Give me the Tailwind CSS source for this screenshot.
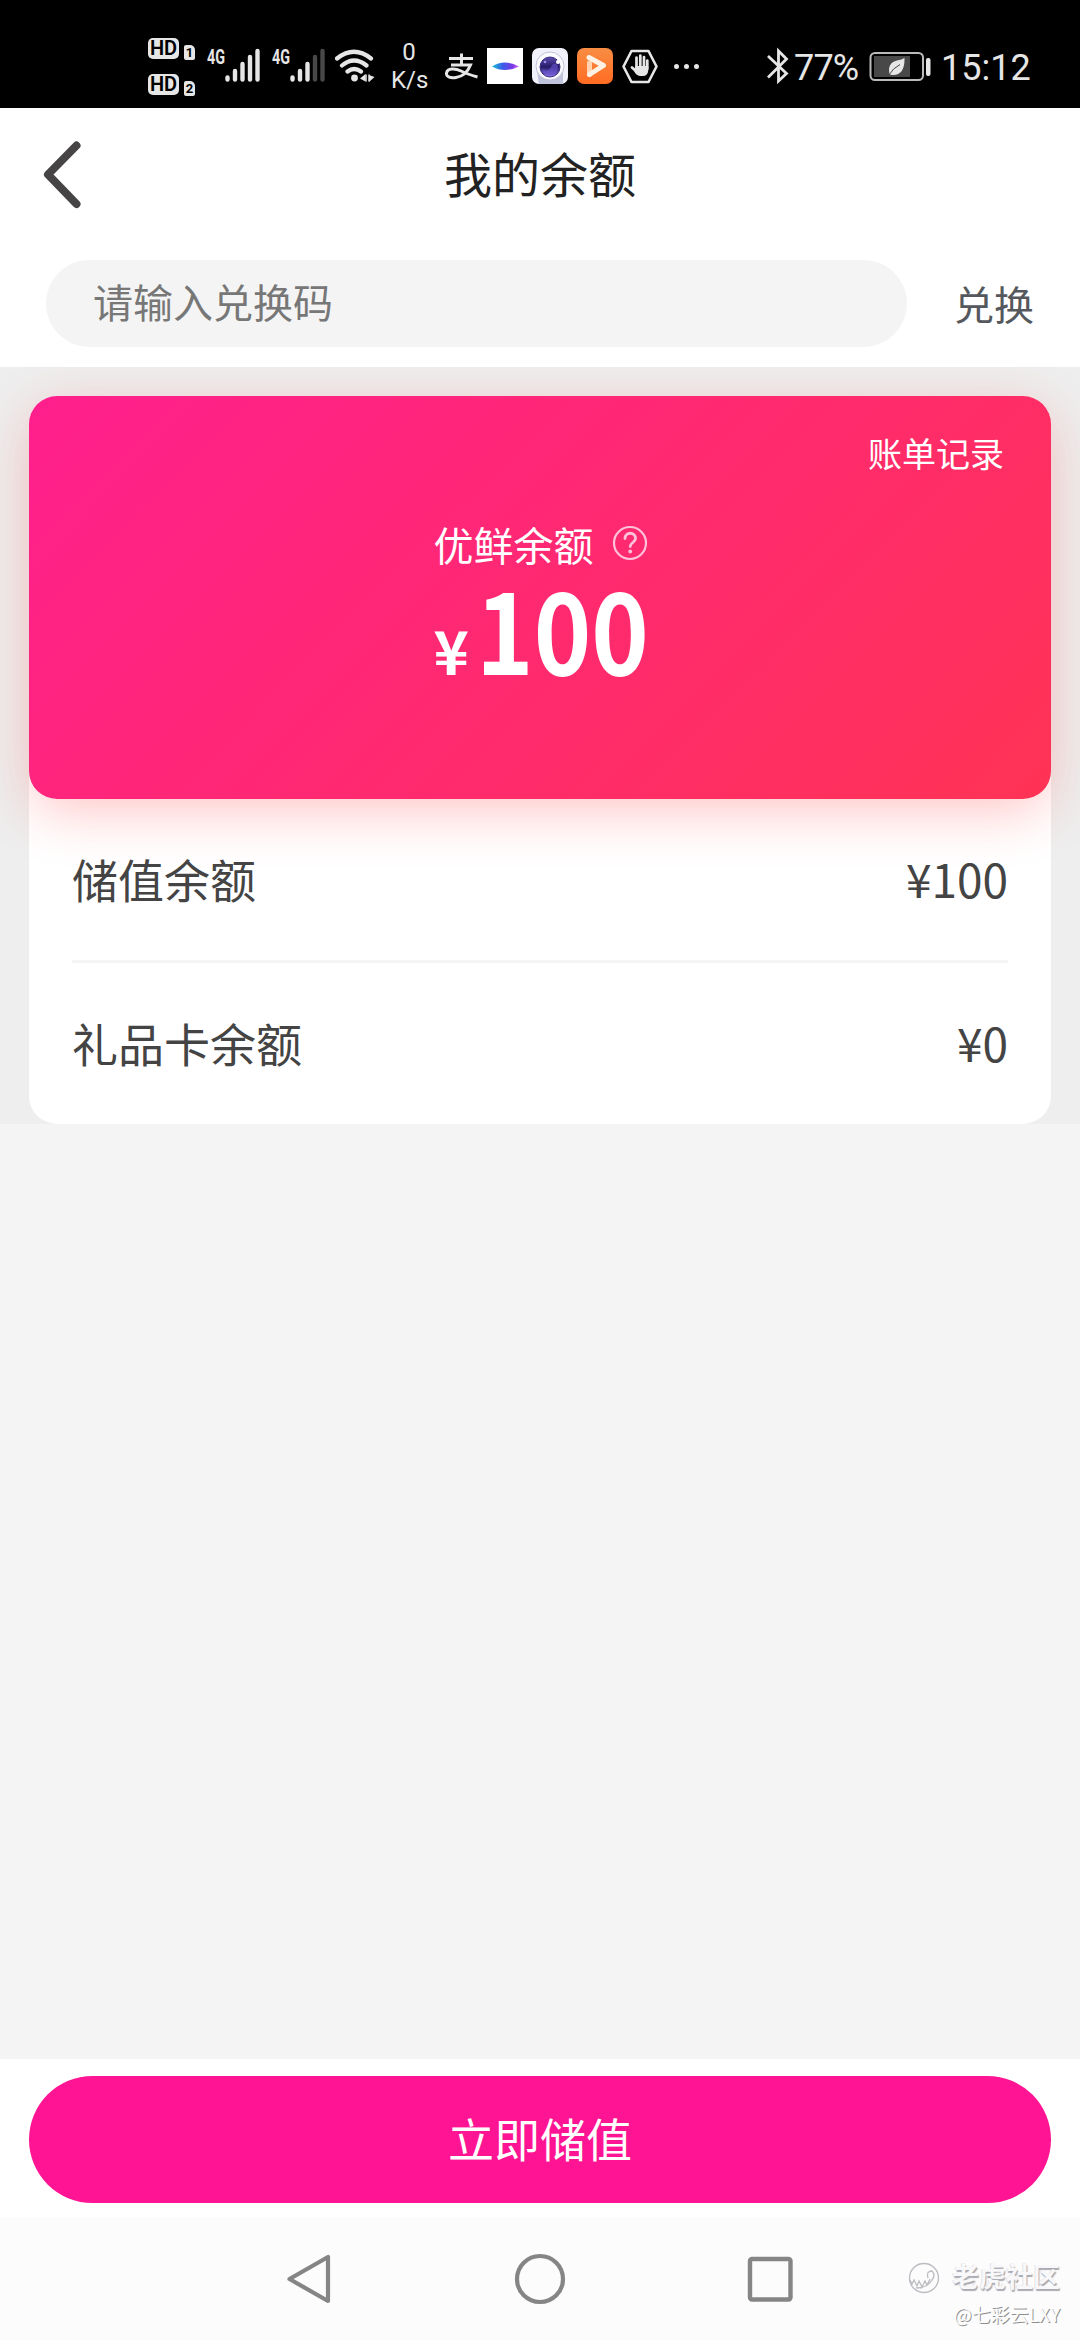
<!DOCTYPE html>
<html lang="zh-CN">
<head>
<meta charset="utf-8">
<title>我的余额</title>
<script src="https://cdn.jsdelivr.net/npm/@tailwindcss/browser@4"></script>
</head>
<body class="w-[1080px] h-[2340px] overflow-hidden flex flex-col bg-[#f4f4f4] font-['Noto_Sans_CJK_SC',sans-serif]">

<!-- Status bar -->
<header class="h-[108px] shrink-0 bg-black text-[#e6e6e6] flex items-center pl-[148px] pr-[49px] font-[Roboto,sans-serif]">
  <div class="w-[48px] mr-[11px] shrink-0 flex flex-col gap-[14px] pt-[26px] pb-[1px] h-[108px] justify-start">
    <div class="flex items-end gap-[5px] h-[22px] mt-[12px]">
      <span class="w-[31px] h-[21px] mb-px rounded-[5px] bg-[#e6e6e6] text-black text-[20px] leading-[21px] font-semibold text-center">HD</span>
      <span class="w-[11px] h-[15px] rounded-[2px] rounded-tr-[5px] bg-[#e6e6e6] text-black text-[13px] leading-[15px] font-bold text-center">1</span>
    </div>
    <div class="flex items-end gap-[5px] h-[22px]">
      <span class="w-[31px] h-[21px] mb-px rounded-[5px] bg-[#e6e6e6] text-black text-[20px] leading-[21px] font-semibold text-center">HD</span>
      <span class="w-[11px] h-[15px] rounded-[2px] rounded-tr-[5px] bg-[#e6e6e6] text-black text-[13px] leading-[15px] font-bold text-center">2</span>
    </div>
  </div>
  <svg class="w-[54px] h-[108px] shrink-0 mr-[11px]" viewBox="207 0 54 108" stroke="#e6e6e6" stroke-width="4.4" stroke-linecap="round">
    <text x="207" y="64" font-size="21" font-weight="700" textLength="18" lengthAdjust="spacingAndGlyphs" fill="#e6e6e6" stroke="none">4G</text>
    <path d="M227.5 77.500V79.500M235 71V79.500M242.500 64V79.500M250 57V79.500M257.500 51V79.500"/>
  </svg>
  <svg class="w-[54px] h-[108px] shrink-0 mr-[9px]" viewBox="272 0 54 108" stroke="#e6e6e6" stroke-width="4.400" stroke-linecap="round">
    <text x="272" y="64" font-size="21" font-weight="700" textLength="18" lengthAdjust="spacingAndGlyphs" fill="#e6e6e6" stroke="none">4G</text>
    <path d="M292.500 77.500V79.500M300 71V79.500M307.500 64V79.500"/>
    <path stroke="#484848" d="M315 57V79.500M322.500 51V79.500"/>
  </svg>
  <svg class="w-[40px] h-[108px] shrink-0 mr-[16px]" viewBox="335 0 40 108" fill="none" stroke="#e6e6e6" stroke-width="4.200" stroke-linecap="round">
    <path d="M337 58.500Q354 45 371 58.500M342 65.500Q354 55.500 366.500 65.500M347.500 71.500Q354 66.500 361 71.500"/>
    <circle cx="354.500" cy="78" r="3.400" fill="#e6e6e6" stroke="none"/>
    <path d="M360 78.500L365.500 74V81.500M374.500 77L369 75V82Z" fill="#e6e6e6" stroke="none"/>
    <path d="M366 75V81M369 75V81" stroke-width="1.500"/>
  </svg>
  <div class="w-[36px] h-[108px] shrink-0 mr-[18px] text-[24px] leading-[28px] text-center pt-[38px] whitespace-nowrap">0<br>K/s</div>
  <svg class="w-[34px] h-[36px] shrink-0 mt-[24px] mr-[8px]" viewBox="445 48 34 36" fill="none" stroke="#e6e6e6" stroke-width="3">
    <path d="M449 58.500H473M461.500 53.500V64.500M451 65H470.500Q466 76 456 77.500C449 78.500 446 76 446.500 73C447.500 68 455 68 461 71Q467 74 477.500 77"/>
  </svg>
  <svg class="w-[36px] h-[36px] shrink-0 mt-[24px] mr-[9px]" viewBox="0 0 36 36">
    <defs><linearGradient id="disc"><stop stop-color="#16c4d8"/><stop offset=".4" stop-color="#3c5be8"/><stop offset=".75" stop-color="#7639e6"/><stop offset="1" stop-color="#d36af0"/></linearGradient></defs>
    <rect width="36" height="36" fill="#fff"/><path d="M5 18.500Q11 14.500 18 14.500T32 18.500Q25 22 18 22T5 18.500Z" fill="url(#disc)"/>
  </svg>
  <svg class="w-[36px] h-[36px] shrink-0 mt-[24px] mr-[9px]" viewBox="0 0 36 36">
    <defs><linearGradient id="lens" x2="0" y2="1"><stop stop-color="#5d4cae"/><stop offset=".5" stop-color="#241a66"/><stop offset="1" stop-color="#8f78ec"/></linearGradient></defs>
    <rect width="36" height="36" rx="7" fill="#f0f1fa"/><path d="M5 23H31V36H7Z" fill="#bfc3dc"/>
    <circle cx="18" cy="18" r="14" fill="#fafaff" stroke="#b4b6cc" stroke-width=".8"/>
    <circle cx="18" cy="19" r="10" fill="url(#lens)" stroke="#3a2f86"/><path d="M10 21Q16 25 19 19T26 18Q26 26 18 27.500Q12 26.500 10 21Z" fill="#6d57d6" opacity=".6"/>
    <circle cx="26" cy="14" r="2" fill="#fff"/><circle cx="13" cy="14" r="1.300" fill="#9a8ce8"/>
  </svg>
  <svg class="w-[36px] h-[36px] shrink-0 mt-[24px] mr-[9px]" viewBox="0 0 36 36" fill="none">
    <defs><linearGradient id="play" x2="0" y2="1"><stop stop-color="#f88d43"/><stop offset="1" stop-color="#ff6c22"/></linearGradient></defs>
    <rect width="36" height="36" rx="7" fill="url(#play)"/>
    <path d="M12.500 15V26.500" stroke="#ffd3b0" stroke-width="5" stroke-linecap="round"/>
    <path d="M12 9.500L26.500 17.500L12.500 26.500" stroke="#fff1e4" stroke-width="5" stroke-linecap="round" stroke-linejoin="round"/>
  </svg>
  <svg class="w-[36px] h-[36px] shrink-0 mt-[24px] mr-[16px]" viewBox="622 48 36 36" fill="none" stroke="#e6e6e6" stroke-linecap="round" stroke-linejoin="round">
    <path d="M631.500 51H648.500L656.500 66.500L648.500 82H631.500L623.500 66.500Z" stroke-width="2.600"/>
    <path d="M636.500 57.500V68M640.300 55.500V68M644 57V68M647.300 60.500V69M632 67.500L637 72" stroke-width="2.700"/>
    <path d="M635.500 66H648.200V71Q647.500 76 643 76H640Q636 75.500 634 71Z" fill="#e6e6e6" stroke="none"/>
  </svg>
  <div class="flex gap-[5px] mt-[24px]"><i class="size-[5px] rounded-full bg-[#e6e6e6]"></i><i class="size-[5px] rounded-full bg-[#e6e6e6]"></i><i class="size-[5px] rounded-full bg-[#e6e6e6]"></i></div>
  <svg class="w-[24px] h-[108px] shrink-0 ml-auto" viewBox="765 0 24 108" fill="none" stroke="#e6e6e6" stroke-width="2.800">
    <path d="M767 56L785.500 73.500L777.500 81V51L785.500 59L767 77.500"/>
  </svg>
  <span class="text-[36px] leading-[48px] mt-[28px] ml-[4px] w-[69px] tracking-[-0.8px]">77%</span>
  <svg class="w-[64px] h-[108px] shrink-0 ml-[6px] mr-[8px]" viewBox="868 0 64 108">
    <rect x="869.500" y="53" width="52.500" height="27" rx="4.500" fill="none" stroke="#b9bbb9" stroke-width="2"/>
    <rect x="873" y="56" width="36" height="21" fill="#484848"/>
    <rect x="925" y="58" width="4.500" height="18" rx="2" fill="#e6e6e6"/>
    <path d="M903.500 58Q904 75 892 75Q889 75 888.500 74Q886 63 896 60.500Q901 59.500 903.500 58Z" fill="#e6e6e6"/>
    <path d="M888 75Q892 68 899 64.500" fill="none" stroke="#484848"/>
  </svg>
  <span class="text-[36px] leading-[48px] mt-[28px] w-[90px] whitespace-nowrap">15:12</span>
</header>

<!-- Title bar and code redemption -->
<section class="h-[259px] shrink-0 bg-white flex flex-col">
  <div class="h-[134px] grid grid-cols-[1fr_auto_1fr] items-center">
    <svg class="w-[44px] h-[72px] ml-[40px]" viewBox="40 139 44 72" fill="none" stroke="#464445" stroke-width="8" stroke-linecap="round" stroke-linejoin="round"><path d="M76.500 145.500L48 174.500L76.500 204"/></svg>
    <h1 class="text-[48px] leading-[64px] pb-[6px] text-[#222]">我的余额</h1>
  </div>
  <div class="flex items-center mt-[18px] pl-[46px] pr-[46px] justify-between">
    <div class="w-[861px] h-[87px] rounded-full bg-[#f4f4f4] pl-[47px] pb-[6px] flex items-center text-[40px] text-[#777] leading-[60px]">请输入兑换码</div>
    <div class="text-[40px] leading-[60px] pb-[2px] text-[#55585c]">兑换</div>
  </div>
</section>

<!-- Balance card -->
<main class="h-[757px] shrink-0 bg-[#eee] px-[29px] pt-[29px] overflow-hidden">
  <div class="h-[728px] rounded-[28px] bg-white">
    <div class="h-[403px] rounded-[28px] bg-[linear-gradient(135deg,#ff1f8d_0%,#ff3355_100%)] shadow-[0_14px_56px_-4px_rgba(255,51,51,0.3)] text-white flex flex-col items-center">
      <div class="self-end mr-[47px] mt-[32px] text-[34px] leading-[50px]">账单记录</div>
      <div class="flex items-center mt-[36px] w-[213px] h-[60px] gap-[18px]">
        <span class="text-[40px] leading-[60px] whitespace-nowrap">优鲜余额</span>
        <svg class="size-[36px] shrink-0 -mt-[2px]" viewBox="0 0 36 36" fill="none" stroke="#ffc2da" stroke-width="2.200" stroke-linecap="round"><circle cx="18" cy="18" r="16"/><path d="M13 13.500C13 6.500 23.500 6.500 23.500 13.500C23.500 17.500 18.200 17.500 18.200 21.500" stroke-width="2.800"/><circle cx="18.200" cy="26.500" r="1.900" fill="#ffc2da" stroke="none"/></svg>
      </div>
      <div class="flex items-baseline -mt-[2px] font-bold leading-[110px] w-[213px] whitespace-nowrap">
        <span class="text-[60px] w-[42px] shrink-0">¥</span><span class="text-[110px] origin-left scale-x-[0.888]">100</span>
      </div>
    </div>
    <div class="px-[43px] text-[46px] leading-[68px] text-[#444]">
      <div class="h-[164px] pb-[4px] border-b-3 border-[#f4f4f4] flex items-center justify-between"><span>储值余额</span><span>¥100</span></div>
      <div class="h-[161px] pb-[4px] flex items-center justify-between"><span>礼品卡余额</span><span>¥0</span></div>
    </div>
  </div>
</main>

<!-- Primary action -->
<footer class="mt-auto h-[158px] shrink-0 bg-white px-[29px] pt-[17px]">
  <div class="h-[127px] rounded-full bg-[#ff1493] text-white text-[46px] leading-[123px] text-center">立即储值</div>
</footer>

<!-- System navigation -->
<nav class="relative h-[123px] shrink-0 bg-[#fcfcfc] flex items-center pl-[285px] gap-[181px]">
  <svg class="w-[48px] h-[54px]" viewBox="0 0 48 54" fill="none" stroke="#858585" stroke-width="4.200" stroke-linejoin="round"><path d="M43 5V49L4.500 27Z"/></svg>
  <svg class="w-[52px] h-[52px]" viewBox="0 0 52 52" fill="none" stroke="#858585" stroke-width="4.200"><circle cx="26" cy="26" r="23"/></svg>
  <svg class="w-[46px] h-[46px]" viewBox="0 0 46 46" fill="none" stroke="#858585" stroke-width="4.400"><rect x="3" y="3" width="40.500" height="40.500" rx="2"/></svg>
  <div class="absolute right-[20px] top-[41px] flex flex-col items-end">
    <div class="flex items-center gap-[12px]">
      <svg class="size-[32px] mt-[3px]" viewBox="0 0 32 32" fill="none" stroke="#bcbcc2" stroke-width="1.300"><circle cx="16" cy="16" r="14.500"/><path d="M2 18L4 22L6 18L9 24L11 19L14 25L17 19L19 23L22 17M20 16Q18 9 24 9Q28 13 24 18Q19 26 8 26"/></svg>
      <span class="text-[27px] leading-[36px] font-bold text-[#f8f8fa] [text-shadow:1px_1.5px_1px_#aaaab2,-0.5px_-0.5px_0_#d4d4da]">老虎社区</span>
    </div>
    <span class="text-[19px] leading-[30px] mt-[5px] text-[#fcfcfc] [text-shadow:1px_1px_0.5px_#8f8f8f]">@七彩云LXY</span>
  </div>
</nav>
</body>
</html>
